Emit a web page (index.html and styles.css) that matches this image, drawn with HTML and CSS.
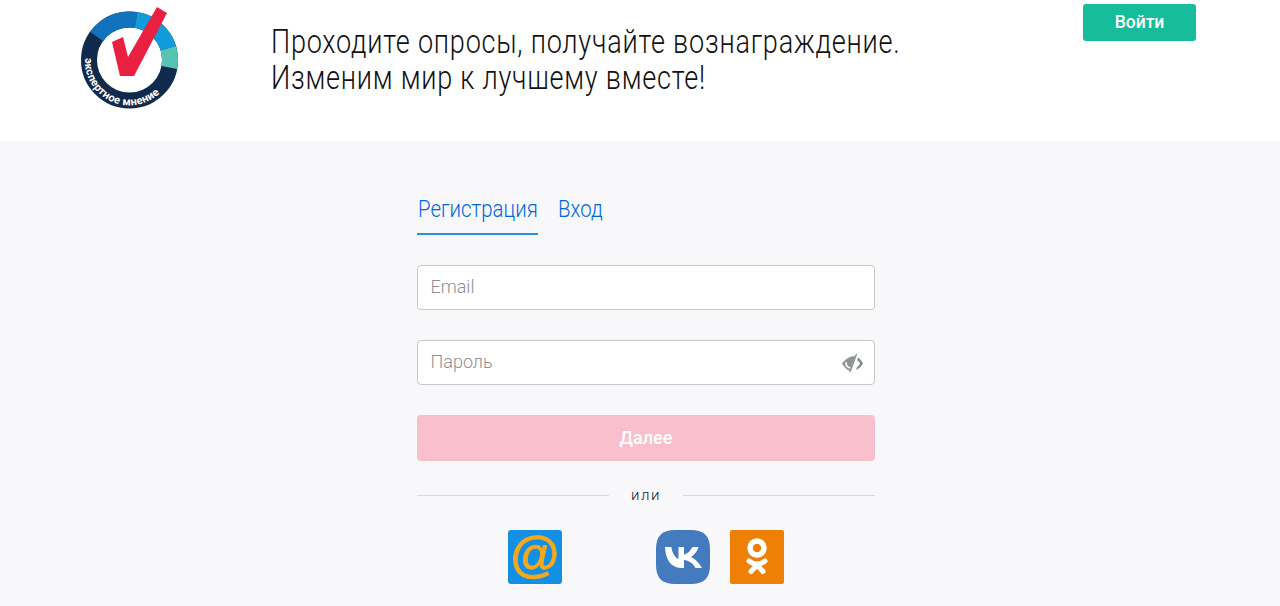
FILE: index.html
```html
<!DOCTYPE html>
<html lang="ru">
<head>
    <meta charset="UTF-8">
    <meta name="viewport" content="width=device-width, initial-scale=1.0">
    <title>Экспертное мнение</title>
    <link rel="stylesheet" href="styles.css">
</head>
<body>
    <header class="header">
        <a class="logo" href="#">
            <svg width="100" height="110" viewBox="0 0 100 110">
                <defs>
                    <path id="logo-arc" d="M6 57 A44.500 44.500 0 0 0 90 81"/>
                </defs>
                <circle cx="50.500" cy="60" r="40.500" fill="none" stroke="#0f2a4d" stroke-width="16"/>
                <path d="M17.600 36.400 A40.500 40.500 0 0 1 57 20" fill="none" stroke="#1273bd" stroke-width="16"/>
                <path d="M57 20 A40.500 40.500 0 0 1 89.300 48.300" fill="none" stroke="#109cdb" stroke-width="16"/>
                <path d="M89.300 48.300 A40.500 40.500 0 0 1 90.300 67.500" fill="none" stroke="#55c4b4" stroke-width="16"/>
                <text class="logo-text" textLength="106"><textPath href="#logo-arc" startOffset="1">экспертное мнение</textPath></text>
                <path d="M33 42 L44 37 L49 57 L78 7 L88 13 L55 76 L41 76 Z" fill="#e9203f"/>
            </svg>
        </a>
        <div class="slogan">
            <div class="slogan-line">Проходите опросы, получайте вознаграждение.</div>
            <div class="slogan-line">Изменим мир к лучшему вместе!</div>
        </div>
        <a class="login-btn" href="#">Войти</a>
    </header>

    <main class="content">
        <form class="auth-form">
            <div class="tabs">
                <a class="tab tab-active tab-signup" href="#"><span class="tab-label">Регистрация</span></a>
                <a class="tab tab-signin" href="#"><span class="tab-label">Вход</span></a>
            </div>
            <div class="field">
                <input class="field-input" type="text" placeholder="Email">
            </div>
            <div class="field">
                <input class="field-input" type="password" placeholder="Пароль">
                <svg class="eye-icon" width="24" height="20" viewBox="0 0 24 20">
                    <path d="M2 10.500 C5 6.500 9 3.500 15 3 L10 18 C7 17 4 14 2 10.500 Z" fill="#8f9493"/>
                    <path d="M6 9 C5.500 12.500 8 15 10.500 15" fill="none" stroke="#fff" stroke-width="1.500"/>
                    <path d="M16.500 1 L10 19" stroke="#8f9493" stroke-width="1.500" fill="none"/>
                    <path d="M18 4.500 C20 6 22 8 23 10.500 C21.500 13 19.500 15.500 16 17 L17 14 C18.500 13 19.500 12 20 10.500 C19.500 9 18.500 8 17 7.500 Z" fill="#7d8c92"/>
                </svg>
            </div>
            <button class="submit-btn" type="button">Далее</button>
            <div class="divider"><span class="divider-text">или</span></div>
            <div class="socials">
                <a class="social social-mail" href="#">@</a>
                <a class="social social-vk" href="#">
                    <svg width="54" height="54" viewBox="0 0 54 54">
                        <path d="M19 0 H35 C48 0 54 6 54 19 V35 C54 48 48 54 35 54 H19 C6 54 0 48 0 35 V19 C0 6 6 0 19 0 Z" fill="#447bbf"/>
                        <path d="M9 17 H15.500 C16 22 18.500 27.500 22.500 29 V17 H28 V24.500 C31.500 24 34.500 20.500 36.500 17 H42.500 C41.500 21 38 25 35 27 C38.500 28.500 43 32.500 46 38 H39.500 C37.500 34 33.500 30.500 28 30 V38 H26 C15 38 9.500 30 9 17 Z" fill="#fff"/>
                    </svg>
                </a>
                <a class="social social-ok" href="#">
                    <svg width="54" height="54" viewBox="0 0 54 54">
                        <rect width="54" height="54" rx="2" fill="#ef8006"/>
                        <circle cx="27" cy="18" r="7" fill="none" stroke="#fff" stroke-width="5.500"/>
                        <path d="M19 31 C24 35 30 35 35 31" fill="none" stroke="#fff" stroke-width="5" stroke-linecap="round"/>
                        <path d="M27 35 L21 41.500 M27 35 L33 41.500" fill="none" stroke="#fff" stroke-width="5" stroke-linecap="round"/>
                    </svg>
                </a>
            </div>
        </form>
    </main>
</body>
</html>
```
FILE: styles.css
```css
* {
    box-sizing: border-box;
}
html, body {
    height: 100%;
}
body {
    margin: 0;
    overflow: hidden;
    display: flex;
    flex-direction: column;
    font-family: Roboto, "Liberation Sans", sans-serif;
    background-color: #f8f8fb;
}
a {
    text-decoration: none;
}
.header {
    height: 141px;
    flex: none;
    display: flex;
    align-items: flex-start;
    background-color: #fff;
    padding-left: 79px;
}
.logo {
    display: block;
    width: 100px;
    height: 110px;
}
.slogan {
    margin-left: 92px;
    padding-top: 24px;
    width: 812px;
    font-size: 33px;
    font-weight: 300;
    line-height: 36px;
    color: #111;
}
.slogan-line {
    white-space: nowrap;
    letter-spacing: 0.93px;
    transform: scaleX(0.82);
    transform-origin: left center;
}
.login-btn {
    display: block;
    width: 113px;
    height: 37px;
    margin-top: 4px;
    line-height: 36px;
    text-align: center;
    font-size: 17.500px;
    font-weight: 500;
    color: #fff;
    background-color: #17bc9b;
    border-radius: 3px;
}
.content {
    flex: 1;
    display: flex;
    justify-content: center;
}
.auth-form {
    width: 458px;
    margin-left: 12px;
}
.tabs {
    display: flex;
    gap: 20px;
    height: 94px;
    padding-top: 52px;
    margin-bottom: 30px;
}
.tab {
    height: 42px;
    font-size: 24px;
    font-weight: 300;
    line-height: 32px;
    color: #0066dd;
    white-space: nowrap;
}
.tab-signup {
    width: 121px;
    padding-left: 1px;
}
.tab-signin {
    width: 45px;
}
.tab-label {
    display: inline-block;
    transform: scaleX(0.85);
    transform-origin: left center;
}
.tab-active {
    border-bottom: 2px solid #2b93d9;
}
.field {
    position: relative;
    margin-bottom: 30px;
}
.field-input {
    display: block;
    width: 100%;
    height: 45px;
    padding: 0 12.500px 2px;
    font-family: inherit;
    font-size: 18px;
    font-weight: 300;
    background-color: #fff;
    border: 1px solid #c8c8c8;
    border-radius: 4px;
    outline: none;
}
.field-input::placeholder {
    color: #909090;
    opacity: 1;
}
.eye-icon {
    position: absolute;
    right: 11px;
    top: 13px;
}
.submit-btn {
    display: block;
    width: 100%;
    height: 46px;
    padding: 0 0 2px;
    font-family: inherit;
    font-size: 18px;
    font-weight: 500;
    color: #fff;
    background-color: #f8bfcd;
    border: none;
    border-radius: 4px;
}
.divider {
    display: flex;
    align-items: center;
    gap: 22px;
    height: 20px;
    margin-top: 24px;
    font-size: 15px;
    font-weight: 300;
    color: #222;
    letter-spacing: 1.500px;
}
.divider::before, .divider::after {
    content: "";
    flex: 1;
    height: 1px;
    background-color: #d9d9d9;
}
.socials {
    display: flex;
    margin-top: 25px;
    padding-left: 91px;
    gap: 20px;
}
.social {
    display: block;
    width: 54px;
    height: 54px;
}
.social-mail {
    margin-right: 74px;
    font-family: "Liberation Sans", sans-serif;
    font-size: 50px;
    font-weight: 700;
    line-height: 50px;
    text-align: center;
    color: #f6a81c;
    -webkit-text-stroke: 0.7px #f6a81c;
    background-color: #138fe3;
    border-radius: 3px;
}
.logo-text {
    font-family: Roboto, sans-serif;
    font-size: 11px;
    font-weight: 700;
    fill: #fff;
}
```
